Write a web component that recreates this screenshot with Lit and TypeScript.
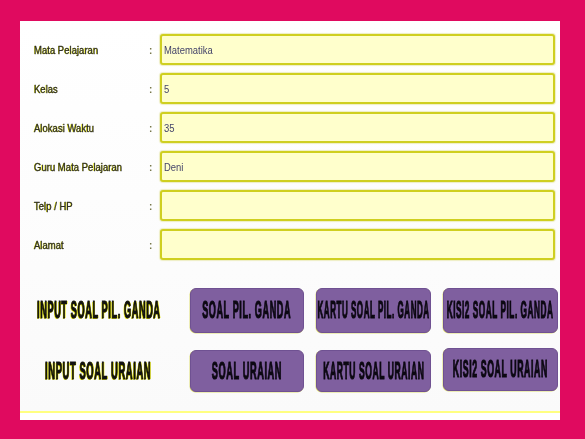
import { LitElement, html, css } from "lit";
import { customElement } from "lit/decorators.js";

const fields = [
  ["Mata Pelajaran", "Matematika"],
  ["Kelas", "5"],
  ["Alokasi Waktu", "35"],
  ["Guru Mata Pelajaran", "Deni"],
  ["Telp / HP", ""],
  ["Alamat", ""],
];

@customElement("app-root")
export class AppRoot extends LitElement {
  static styles = css`
    :host {
      display: block;
      width: 585px;
      height: 439px;
      box-sizing: border-box;
      padding: 21px 25px 19px 20px;
      background: #e00a5f;
      font-family: "Liberation Sans", Arial, sans-serif;
      overflow: hidden;
    }
    .panel {
      height: 399px;
      box-sizing: border-box;
      padding-top: 13px;
      display: flex;
      flex-direction: column;
      background: linear-gradient(#ffffff 0%, #fdfdfd 45%, #fafafa 100%);
      border-bottom: 7px solid #fff;
    }
    .fields {
      display: flex;
      flex-direction: column;
      gap: 8px;
      padding: 0 5px 0 14px;
    }
    .row {
      display: grid;
      grid-template-columns: 115px 11px 1fr;
      align-items: center;
    }
    .label {
      font-size: 11.5px;
      color: #2a2a22;
      white-space: nowrap;
      -webkit-text-stroke: 0.3px #333;
      text-shadow: -0.7px 0.4px 0 #e6e600;
      filter: blur(0.4px);
      transform: scaleX(0.83);
      transform-origin: left center;
    }
    .colon {
      font-size: 10px;
      color: #77774a;
      font-weight: 700;
      padding-top: 2px;
      filter: blur(0.3px);
    }
    .field {
      height: 31px;
      box-sizing: border-box;
      border: 2px solid #cfcf20;
      border-radius: 3px;
      background: #ffffcc;
      box-shadow: 0 0 1px 1px #eeeec4;
      padding: 1px 2px 0;
      display: flex;
      align-items: center;
      font-size: 11.5px;
      color: #44446a;
    }
    .value {
      display: inline-block;
      white-space: nowrap;
      transform: scaleX(0.82);
      transform-origin: left center;
      filter: blur(0.4px);
    }
    .buttons {
      flex: 1;
      display: grid;
      grid-template-columns: 158px 114px 115px 115px;
      grid-template-rows: 45px 42px;
      column-gap: 12px;
      row-gap: 17px;
      padding-top: 28px;
      align-content: start;
      border-bottom: 2px solid #ffff80;
    }
    .title {
      display: flex;
      align-items: center;
      justify-content: center;
      font-weight: 700;
      font-size: 23px;
      letter-spacing: 1.5px;
      color: #111;
      white-space: nowrap;
      text-shadow: -1.5px 1px 0 #e8e800, 1.5px -0.5px 0 #e8e800;
      margin-right: 1px;
    }
    .btn {
      display: flex;
      align-items: center;
      justify-content: center;
      background: #7f5f9f;
      border: 1px solid #6f5192;
      border-radius: 6px;
      box-sizing: border-box;
      font-weight: 700;
      font-size: 23px;
      letter-spacing: 1.5px;
      color: #0c0812;
      white-space: nowrap;
      box-shadow: -0.5px 0.5px 0 #dede70;
    }
    .cond {
      display: inline-block;
      -webkit-text-stroke: 1.2px currentColor;
      filter: blur(0.3px);
    }
    .t1 { transform: scaleX(0.399); }
    .t2 { transform: scaleX(0.408); }
    .b1 { transform: scaleX(0.395); }
    .b2 { transform: scaleX(0.349); }
    .b3 { transform: scaleX(0.358); }
    .b4 { transform: scaleX(0.4); }
    .b5 { transform: scaleX(0.372); }
    .b6 { transform: scaleX(0.382); }
    .up { margin-top: -2px; margin-bottom: 1px; }
  `;

  render() {
    return html`
      <div class="panel">
        <div class="fields">
          ${fields.map(
            ([l, v]) => html`
              <div class="row">
                <span class="label">${l}</span>
                <span class="colon">:</span>
                <div class="field"><span class="value">${v}</span></div>
              </div>
            `
          )}
        </div>
        <div class="buttons">
          <div class="title"><span class="cond t1">INPUT SOAL PIL. GANDA</span></div>
          <div class="btn"><span class="cond b1">SOAL PIL. GANDA</span></div>
          <div class="btn"><span class="cond b2">KARTU SOAL PIL. GANDA</span></div>
          <div class="btn"><span class="cond b3">KISI2 SOAL PIL. GANDA</span></div>
          <div class="title"><span class="cond t2">INPUT SOAL URAIAN</span></div>
          <div class="btn"><span class="cond b4">SOAL URAIAN</span></div>
          <div class="btn"><span class="cond b5">KARTU SOAL URAIAN</span></div>
          <div class="btn up"><span class="cond b6">KISI2 SOAL URAIAN</span></div>
        </div>
      </div>
    `;
  }
}
